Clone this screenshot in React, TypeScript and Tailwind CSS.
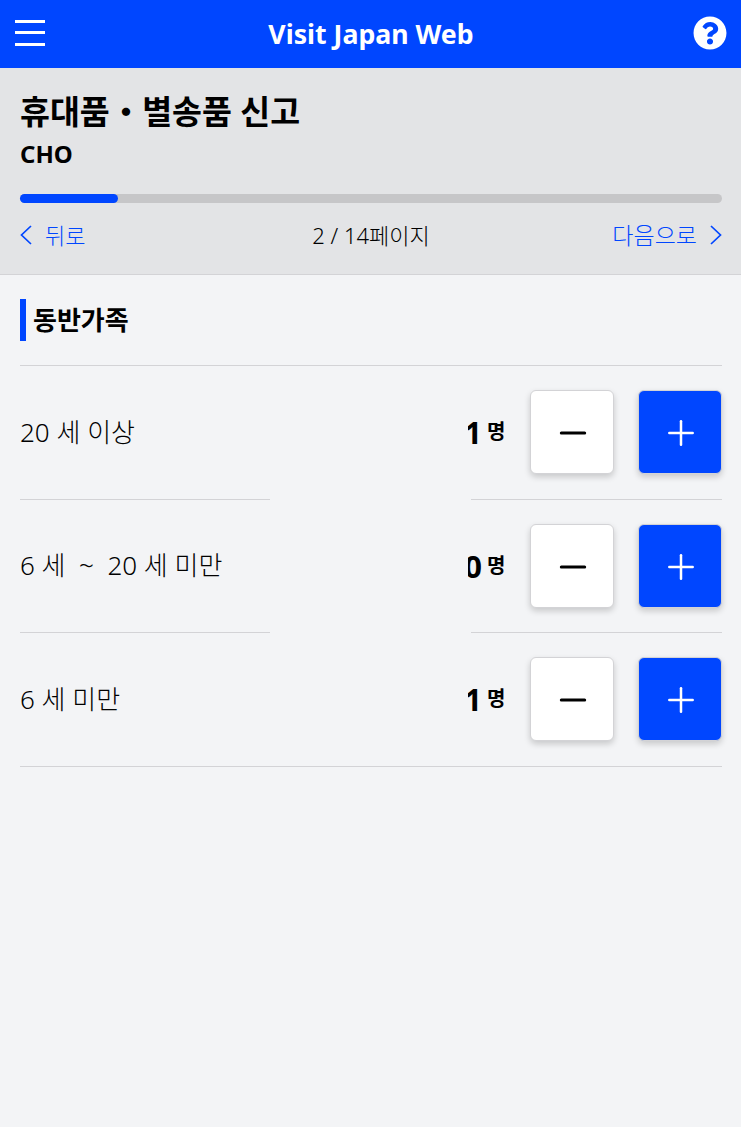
import { Minus, Plus } from 'lucide-react';
import { FaQuestionCircle } from 'react-icons/fa';

const rows = [
  { label: '20 세 이상', count: 1 },
  { label: '6 세  ~  20 세 미만', count: 0 },
  { label: '6 세 미만', count: 1 },
];

function CounterRow({ label, count, last }: { label: string; count: number; last: boolean }) {
  return (
    <div className={`flex h-[133.5px] ${last ? 'border-b border-[#d3d3d6]' : ''}`}>
      <div className={`flex w-[250px] items-center text-[26px] font-light whitespace-pre text-black ${last ? '' : 'border-b border-[#d3d3d6]'}`}>
        {label}
      </div>
      <div className={`ml-auto flex w-[251px] items-center ${last ? '' : 'border-b border-[#d3d3d6]'}`}>
        {/* the count box is narrower than the digit in the original too */}
        <div className="-ml-[3px] flex h-[34px] w-[14px] justify-end overflow-hidden">
          <span className="text-[31px] leading-[34px] font-bold text-black">{count}</span>
        </div>
        <span className="ml-[5px] text-[20px] font-bold text-black">명</span>
        <button className="ml-auto flex h-[84px] w-[84px] items-center justify-center rounded-[6px] border border-[#d3d3d6] bg-white shadow-[0_3px_6px_rgba(0,0,0,0.18)]">
          <Minus className="h-[40px] w-[40px] translate-x-[1px] translate-y-[1px] text-black" strokeWidth={1.8} />
        </button>
        <button className="ml-[24px] flex h-[84px] w-[84px] items-center justify-center rounded-[6px] border border-[#d3d3d6] bg-[#0046ff] shadow-[0_3px_6px_rgba(0,0,0,0.18)]">
          <Plus className="h-[40px] w-[40px] translate-x-[1px] translate-y-[1px] text-white" strokeWidth={1.5} />
        </button>
      </div>
    </div>
  );
}

export default function App() {
  return (
    <div className="min-h-[1127px] bg-[#f3f4f6] font-['Noto_Sans','Noto_Sans_CJK_KR',sans-serif]">
      <header className="flex h-[68px] items-center justify-between bg-[#0046ff] pr-[14px] pl-[15px]">
        <div className="mr-[4px] mb-[3px] flex w-[30px] flex-col gap-[8.5px]">
          <div className="h-[3px] bg-white" />
          <div className="h-[3px] bg-white" />
          <div className="h-[3px] bg-white" />
        </div>
        <h1 className="text-[26.7px] font-bold text-white">Visit Japan Web</h1>
        <FaQuestionCircle className="mb-[3px] h-[34px] w-[34px] text-white" />
      </header>

      <section className="h-[207px] border-b border-[#d3d3d6] bg-[#e3e4e6] pt-[23px] pr-[19px] pl-[20px]">
        <h2 className="text-[32.5px] leading-[42px] font-bold text-black">휴대품・별송품 신고</h2>
        <p className="mt-[6px] text-[24px] leading-[30px] font-bold text-black">CHO</p>
        <div className="mt-[25px] h-[9px] rounded-full bg-[#c6c6c8]">
          <div className="h-full w-[98px] rounded-full bg-[#0046ff]" />
        </div>
        <div className="mt-[16px] grid grid-cols-3 items-center text-[23px] leading-[32px] font-light">
          <div className="flex items-center gap-[13px] text-[#0046ff]">
            <svg className="h-[20px] w-[12px]" viewBox="0 0 12 20" fill="none" stroke="currentColor" strokeWidth="1.7">
              <path d="M11 1 L1.5 10 L11 19" />
            </svg>
            <span className="text-[22px]">뒤로</span>
          </div>
          <span className="text-center text-[22px] whitespace-nowrap text-black">2 / 14페이지</span>
          <div className="flex items-center justify-end gap-[13px] text-[#0046ff]">
            <span>다음으로</span>
            <svg className="h-[20px] w-[12px]" viewBox="0 0 12 20" fill="none" stroke="currentColor" strokeWidth="1.7">
              <path d="M1 1 L10.5 10 L1 19" />
            </svg>
          </div>
        </div>
      </section>

      <main className="pt-[24px] pr-[19px] pl-[20px]">
        <div className="flex h-[42px] items-center border-l-[6px] border-[#0046ff] pl-[7px] text-[26px] font-bold text-black">
          동반가족
        </div>
        <div className="mt-[24px] border-t border-[#d3d3d6]">
          {rows.map((row, i) => (
            <CounterRow key={row.label} {...row} last={i === rows.length - 1} />
          ))}
        </div>
      </main>
    </div>
  );
}
